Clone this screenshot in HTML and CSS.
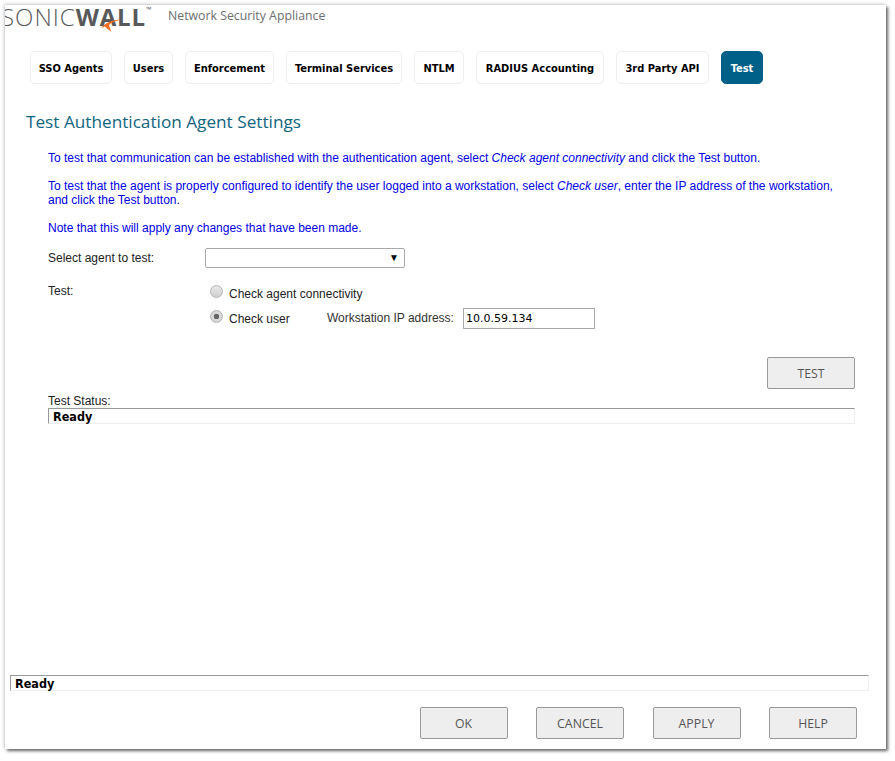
FILE: index.html
```html
<!DOCTYPE html>
<html lang="en">
<head>
<meta charset="utf-8">
<title>Test Authentication Agent Settings</title>
<link rel="stylesheet" href="styles.css">
</head>
<body>
<div class="window">
  <header class="brand">
    <div class="logo">
      <span class="logo-light">SONIC</span><span class="logo-bold">WALL</span><span class="logo-tm">™</span>
      <svg class="swoosh" width="20" height="14" viewBox="0 0 20 14" aria-hidden="true"><path d="M0 10C4 5 11 2 20 1.500C14 3 10 4.500 8 7C8.500 9 9.500 12 10.500 14C8 12 6 10.500 4 8.500C2.500 9 1 9.500 0 10Z" fill="#f26b21"/></svg>
    </div>
    <div class="appliance">Network Security Appliance</div>
  </header>
  <nav class="tabs">
    <a class="tab">SSO Agents</a>
    <a class="tab">Users</a>
    <a class="tab">Enforcement</a>
    <a class="tab">Terminal Services</a>
    <a class="tab">NTLM</a>
    <a class="tab">RADIUS Accounting</a>
    <a class="tab">3rd Party API</a>
    <a class="tab active">Test</a>
  </nav>
  <h1 class="title">Test Authentication Agent Settings</h1>
  <section class="notes">
    <p>To test that communication can be established with the authentication agent, select <em>Check agent connectivity</em> and click the Test button.</p>
    <p>To test that the agent is properly configured to identify the user logged into a workstation, select <em>Check user</em>, enter the IP address of the workstation, and click the Test button.</p>
    <p>Note that this will apply any changes that have been made.</p>
  </section>
  <section class="form">
    <div class="agent-row">
      <label class="form-label">Select agent to test:</label>
      <div class="select"><span class="arrow">▼</span></div>
    </div>
    <div class="test-row">
      <div class="form-label">Test:</div>
      <div class="options">
        <label class="option"><input class="radio" type="radio" name="mode"><span>Check agent connectivity</span></label>
        <div class="option option-user">
          <label class="user-choice"><input class="radio" type="radio" name="mode" checked><span>Check user</span></label>
          <label class="ip-label">Workstation IP address:</label>
          <input class="ip-input" type="text" value="10.0.59.134">
        </div>
      </div>
    </div>
    <div class="test-action"><button class="btn">TEST</button></div>
    <div class="status-label">Test Status:</div>
    <div class="status">Ready</div>
  </section>
  <footer class="footer">
    <div class="status">Ready</div>
    <div class="actions">
      <button class="btn">OK</button>
      <button class="btn">CANCEL</button>
      <button class="btn">APPLY</button>
      <button class="btn">HELP</button>
    </div>
  </footer>
</div>
</body>
</html>
```
FILE: styles.css
```css
* { box-sizing: border-box; }
html, body { margin: 0; padding: 0; background: #fff; }
body { width: 895px; height: 761px; padding: 5px 9px 12px 5px; overflow: hidden; font-family: "Liberation Sans", Arial, sans-serif; font-size: 12px; color: #222; }
.window { width: 881px; height: 744px; background: #fff; display: flex; flex-direction: column; box-shadow: 2px 2px 3px 0 #666, -1px -1px 3px 0 #ccc; }
.brand { height: 46px; display: flex; align-items: flex-start; overflow: hidden; }
.logo { position: relative; width: 150px; height: 30px; white-space: nowrap; font-size: 24px; line-height: 24px; color: #58595b; font-family: "Open Sans", sans-serif; overflow: hidden; }
.logo-light { font-weight: 300; letter-spacing: 1px; margin-left: -4px; }
.logo-bold { font-weight: 700; letter-spacing: 0.800px; }
.logo-tm { position: absolute; left: 141px; top: 0; font-size: 7px; line-height: 10px; }
.swoosh { position: absolute; left: 96px; top: 13px; }
.appliance { margin: 3px 0 0 13px; font-family: "Open Sans", sans-serif; font-size: 12.300px; line-height: 16px; color: #6d6e71; }
.tabs { display: grid; grid-template-columns: 82px 49px 89px 116px 50px 128px 93px 42px; gap: 12px; margin-left: 25px; }
.tab { height: 33px; padding-top: 1px; display: flex; align-items: center; justify-content: center; border: 1px solid #eee; border-radius: 5px; background: #fff; color: #000; font-family: "DejaVu Sans Condensed", "DejaVu Sans", sans-serif; font-stretch: condensed; font-weight: 700; font-size: 11px; white-space: nowrap; }
.tab.active { background: #006088; border-color: #006088; color: #fff; }
.title { margin: 26px 0 0 21px; font-family: "Open Sans", sans-serif; font-weight: 400; font-size: 17.200px; line-height: 24px; color: #0f6680; }
.notes { margin: 17px 45px 0 43px; color: #0000e6; line-height: 14px; }
.notes p { margin: 0 0 14px; }
.form { margin: 0 31px 0 43px; }
.agent-row { display: flex; align-items: center; height: 20px; margin-top: -1px; }
.form-label { width: 157px; flex: none; }
.select { position: relative; width: 200px; height: 20px; border: 1px solid #aaa; border-radius: 2px; background: #fff; }
.arrow { position: absolute; right: 5px; top: 3px; font-size: 10px; line-height: 12px; color: #000; }
.test-row { display: flex; margin-top: 15px; }
.test-row .form-label { line-height: 16px; }
.options { margin-left: 5px; }
.option { display: flex; align-items: center; height: 21px; }
.option-user { margin-top: 4px; height: 21px; }
.user-choice { display: flex; align-items: center; width: 117px; }
.radio { appearance: none; -webkit-appearance: none; width: 13px; height: 13px; margin: 0 6px 0 0; border: 1px solid #b4b4b4; border-radius: 50%; background: linear-gradient(#e8e8e8, #cfcfcf); flex: none; position: relative; top: -2px; }
.radio:checked { background: radial-gradient(circle, #666 0 2.500px, #d8d8d8 3px); }
.ip-label { width: 136px; flex: none; position: relative; top: -1px; color: #333; }
.ip-input { width: 132px; height: 21px; border: 1px solid #aaa; padding: 0 2px; font-family: "DejaVu Sans", sans-serif; font-size: 11px; color: #000; background: #fff; outline: none; }
.test-action { display: flex; justify-content: flex-end; margin-top: 28px; }
.btn { width: 88px; height: 32px; padding: 0; border: 1px solid #999; border-radius: 2px; background: #eee; color: #555; font-family: "Open Sans", sans-serif; font-size: 12.300px; }
.status-label { margin-top: 5px; line-height: 14px; height: 14px; }
.status { height: 16px; padding-left: 4px; border: 1px solid #eee; border-top-color: #999; border-left-color: #999; background: #fff; font-family: "DejaVu Sans Condensed", "DejaVu Sans", sans-serif; font-stretch: condensed; font-weight: 700; font-size: 12.500px; line-height: 16px; color: #000; }
.footer { margin-top: auto; padding: 0 17px 10px 5px; }
.actions { display: flex; gap: 28.500px; justify-content: flex-end; margin-top: 16px; padding-right: 12px; }
```
